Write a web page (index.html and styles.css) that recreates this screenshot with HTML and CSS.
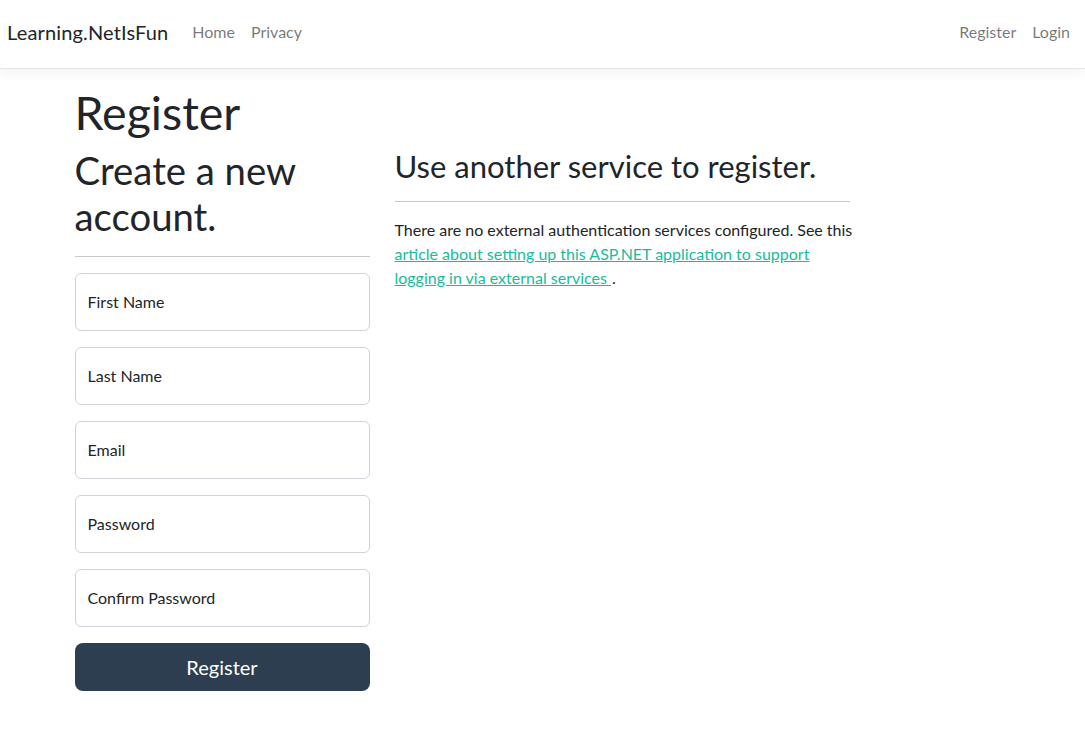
FILE: index.html
```html
<!DOCTYPE html>
<html lang="en">
<head>
<meta charset="utf-8">
<title>Register - Learning.NetIsFun</title>
<link rel="stylesheet" href="styles.css">
</head>
<body>
<header class="navbar">
  <div class="nav-left">
    <a class="brand" href="#">Learning.NetIsFun</a>
    <nav class="nav-links">
      <a class="nav-link" href="#">Home</a>
      <a class="nav-link" href="#">Privacy</a>
    </nav>
  </div>
  <nav class="nav-links">
    <a class="nav-link" href="#">Register</a>
    <a class="nav-link" href="#">Login</a>
  </nav>
</header>
<main class="container">
  <h1 class="title">Register</h1>
  <div class="row">
    <section class="col-form">
      <h2 class="subtitle">Create a new account.</h2>
      <hr class="rule">
      <form class="form">
        <div class="field"><span class="field-label">First Name</span></div>
        <div class="field"><span class="field-label">Last Name</span></div>
        <div class="field"><span class="field-label">Email</span></div>
        <div class="field"><span class="field-label">Password</span></div>
        <div class="field"><span class="field-label">Confirm Password</span></div>
        <button type="button" class="btn-primary">Register</button>
      </form>
    </section>
    <section class="col-ext">
      <h3 class="ext-title">Use another service to register.</h3>
      <hr class="rule">
      <p class="ext-text">There are no external authentication services configured. See this <a class="ext-link" href="#">article about setting up this ASP.NET application to support logging in via external services&nbsp;</a><span class="dot">.</span></p>
    </section>
  </div>
</main>
</body>
</html>
```
FILE: styles.css
```css
* { box-sizing: border-box; }
html, body { margin: 0; padding: 0; }
body {
  font-family: Lato, "Open Sans", "Liberation Sans", sans-serif;
  font-size: 16px;
  line-height: 1.5;
  color: #212529;
  background: #fff;
}
a { text-decoration: none; }

.navbar {
  height: 69px;
  border-bottom: 1px solid #e3e3ea;
  box-shadow: 0 4px 12px rgba(0,0,0,.05);
  display: flex;
  align-items: center;
  justify-content: space-between;
  padding: 0 7px 5px 7px;
  margin-bottom: 16px;
}
.nav-left { display: flex; align-items: center; }
.brand {
  font-size: 20px;
  color: #212529;
  margin-right: 16px;
  line-height: 30px;
  letter-spacing: 0.15px;
}
.nav-links { display: flex; align-items: center; }
.nav-link {
  color: rgba(0,0,0,.55);
  padding: 8px;
  line-height: 24px;
}

.container {
  width: 960px;
  margin: 0 auto;
  padding: 0 12px;
}
.title {
  font-size: 46.5px;
  font-weight: 400;
  line-height: 1.2;
  margin: 0 0 7px;
}
.row {
  display: flex;
  gap: 25px;
}
.col-form { width: 295px; flex: none; }
.col-ext { width: 455px; flex: none; }
.subtitle {
  font-size: 38.3px;
  font-weight: 400;
  line-height: 1.2;
  margin: 0;
}
.ext-title {
  font-size: 31px;
  font-weight: 400;
  line-height: 1.2;
  margin: 0;
}
.rule {
  border: 0;
  border-top: 1px solid #c8c8c8;
  margin: 16px 0;
  height: 0;
}
.form { display: flex; flex-direction: column; }
.field {
  height: 58px;
  border: 1px solid #ced4da;
  border-radius: 6px;
  margin-bottom: 16px;
  display: flex;
  align-items: center;
  padding: 0 12px;
}
.field-label { font-size: 16px; color: #212529; }
.btn-primary {
  height: 48px;
  border: 0;
  border-radius: 8px;
  background: #2c3e50;
  color: #fff;
  font-family: inherit;
  font-size: 20px;
  width: 100%;
}
.ext-text { margin: 0 -10px 0 0; }
.ext-link { color: #18bc9c; text-decoration: underline; }
.dot { margin-left: 1px; }
```
